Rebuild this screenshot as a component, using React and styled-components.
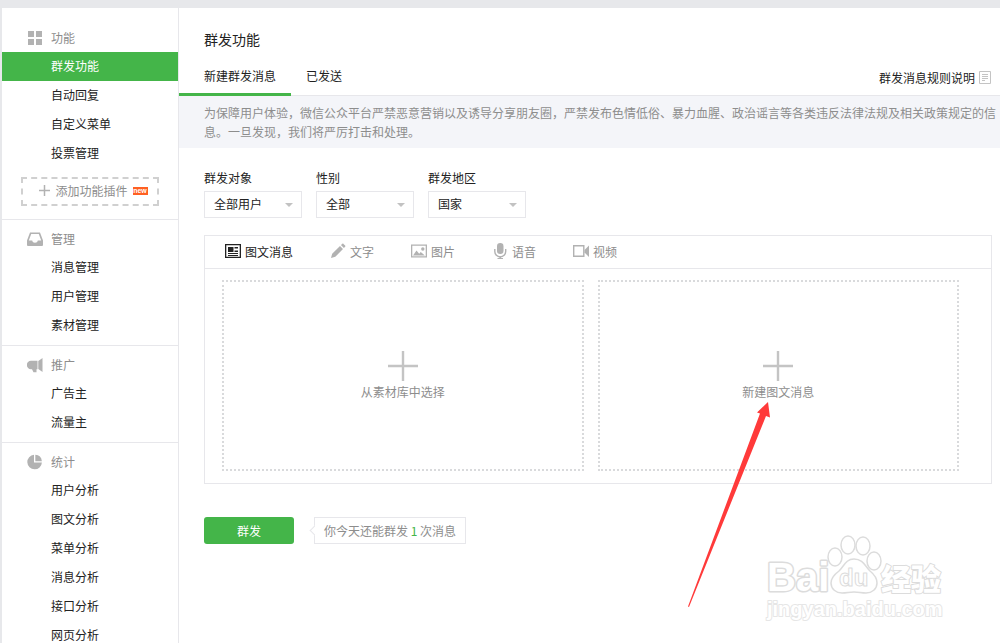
import React from "react";
import styled, { createGlobalStyle } from "styled-components";

const GlobalStyle = createGlobalStyle`
  *, *::before, *::after { box-sizing: border-box; }
  body { margin: 0; background: #e7e8eb; }
  body, button, select {
    font-family: "Noto Sans CJK SC", "Liberation Sans", sans-serif;
    font-size: 12px;
    color: #222;
  }
  a { color: inherit; text-decoration: none; }
`;

const Page = styled.div`
  position: relative;
  height: 100vh;
  padding: 8px 0 0 2px;
  overflow: hidden;
`;

const Shell = styled.div`
  display: flex;
  min-height: 100%;
  background: #fff;
`;

const Sidebar = styled.nav`
  flex: none;
  width: 177px;
  border-right: 1px solid #e7e7eb;
`;

const Group = styled.section`
  padding: ${(p) => (p.$first ? "16px 0 13px" : "5px 0")};
  border-top: ${(p) => (p.$first ? "none" : "1px solid #e7e7eb")};
`;

const GroupTitle = styled.h2`
  display: flex;
  align-items: center;
  gap: 8px;
  height: 28px;
  margin: 0;
  padding: 0 0 2px 25px;
  font-size: 12px;
  font-weight: 400;
  color: #8d8d8d;

  svg { margin-top: 2px; }
`;

const NavLink = styled.a`
  display: block;
  padding: 0 0 2px 49px;
  line-height: 27px;
  color: ${(p) => (p.$active ? "#fff" : "#222")};
  background: ${(p) => (p.$active ? "#44b549" : "transparent")};
`;

const PluginButton = styled.button`
  display: flex;
  align-items: center;
  justify-content: center;
  gap: 5px;
  width: 138px;
  height: 29px;
  margin: 9px 0 0 19px;
  padding: 0 0 2px 7px;
  border: 2px dashed #d0d0d0;
  background: none;
  color: #8d8d8d;
`;

const NewBadge = styled.span`
  width: 15px;
  height: 8px;
  background: #ff6022;
  color: #fff;
  font: 700 7px/7px "Liberation Sans", sans-serif;
  text-align: center;
`;

const Main = styled.main`
  flex: 1;
  min-width: 0;
`;

const Title = styled.h1`
  margin: 0;
  padding: 21px 25px 1px;
  font-size: 14px;
  line-height: 20px;
  font-weight: 400;
`;

const TabBar = styled.div`
  display: flex;
  align-items: flex-end;
  height: 46px;
  padding-right: 9px;
  border-bottom: 1px solid #e7e7eb;
`;

const Tab = styled.a`
  height: 38px;
  margin-bottom: -1px;
  padding: 7px 15px 0 ${(p) => (p.$active ? "25px" : "15px")};
  line-height: 22px;
  border-bottom: 3px solid ${(p) => (p.$active ? "#44b549" : "transparent")};
`;

const RulesLink = styled.a`
  display: flex;
  align-items: center;
  gap: 4px;
  height: 36px;
  margin-left: auto;
`;

const Notice = styled.p`
  margin: 0;
  padding: 7px 0 7px 25px;
  line-height: 19px;
  color: #8d8d8d;
  background: #f4f5f9;
`;

const Content = styled.div`
  padding: 20px 8px 0 25px;
`;

const Filters = styled.div`
  display: flex;
  gap: 14px;
`;

const Field = styled.label`
  display: flex;
  flex-direction: column;
  gap: 3px;
  line-height: 20px;
`;

const SelectBox = styled.span`
  display: block;
  position: relative;
  width: 98px;

  &::after {
    content: "";
    position: absolute;
    right: 9px;
    top: 12px;
    border: 4px solid transparent;
    border-top-color: #c2c2c2;
    border-bottom: 0;
    pointer-events: none;
  }
`;

const Select = styled.select`
  display: block;
  appearance: none;
  width: 100%;
  height: 27px;
  padding: 0 20px 2px 9px;
  border: 1px solid #e7e7eb;
  border-radius: 0;
  background: #fff;
`;

const Panel = styled.section`
  margin-top: 17px;
  border: 1px solid #e7e7eb;
`;

const MediaTabs = styled.div`
  display: flex;
  gap: 37px;
  height: 33px;
  padding-left: 20px;
  border-bottom: 1px solid #e7e7eb;
`;

const MediaTab = styled.button`
  display: flex;
  align-items: center;
  gap: 4px;
  padding: 0 0 2px;
  border: 0;
  background: none;
  color: ${(p) => (p.$active ? "#222" : "#8d8d8d")};
`;

const Cards = styled.div`
  display: flex;
  gap: 14px;
  padding: 11px 32px 12px 17px;
`;

const CardSlot = styled.div`
  position: relative;
  flex: 1;
`;

const Card = styled.button`
  display: flex;
  flex-direction: column;
  align-items: center;
  justify-content: center;
  gap: 1px;
  width: 100%;
  height: 191px;
  padding: 2px 0 0;
  border: 2px dotted #d9dadc;
  background: none;
  color: #8d8d8d;
  line-height: 20px;
`;

const Pointer = styled.svg`
  position: absolute;
  left: calc(50% - 91px);
  top: 121px;
  pointer-events: none;
`;

const Footer = styled.div`
  display: flex;
  gap: 20px;
  margin-top: 33px;
`;

const SendButton = styled.button`
  width: 90px;
  height: 27px;
  padding: 0;
  border: 0;
  border-radius: 3px;
  background: #44b549;
  color: #fff;
`;

const Hint = styled.span`
  position: relative;
  height: 27px;
  padding: 0 9px;
  border: 1px solid #e7e7eb;
  line-height: 26px;
  color: #8d8d8d;

  &::before {
    content: "";
    position: absolute;
    left: -4px;
    top: 9px;
    width: 7px;
    height: 7px;
    border: solid #e7e7eb;
    border-width: 0 0 1px 1px;
    background: #fff;
    transform: rotate(45deg);
  }
`;

const Count = styled.em`
  font-style: normal;
  color: #44b549;
`;

const Watermark = styled.svg`
  position: absolute;
  right: 50px;
  bottom: 18px;
  pointer-events: none;
`;

const icon = { width: 16, height: 16, viewBox: "0 0 16 16", fill: "#b2b2b2", "aria-hidden": true };

const GridIcon = () => (
  <svg {...icon}>
    <path d="M1 1h6v6H1zM9 1h6v6H9zM1 9h6v6H1zM9 9h6v6H9z" />
  </svg>
);

const InboxIcon = () => (
  <svg {...icon}>
    <path fillRule="evenodd" d="M3 1.500h10l3 8V14a1 1 0 0 1-1 1H1a1 1 0 0 1-1-1V9.500zM4.200 3 1.800 9.500h3.400c.3 1.500 1.300 2.200 2.800 2.200s2.500-.7 2.800-2.200h3.400L11.800 3z" />
  </svg>
);

const MegaphoneIcon = () => (
  <svg {...icon}>
    <path d="M4 3.800h6.500v8.400H9.500v3H6.500L5 12.200H4a4.200 4.200 0 0 1 0-8.400zM11.300 4 15.500 1v14l-4.200-3z" />
  </svg>
);

const PieIcon = () => (
  <svg {...icon}>
    <path d="M7 .8V8.500h7.900A7.300 7.300 0 1 1 7 .8z" />
    <path d="M8.300.8A7.200 7.200 0 0 1 14.900 7.200H8.300z" />
  </svg>
);

const NewsIcon = () => (
  <svg {...icon} fill="#222">
    <path fillRule="evenodd" d="M0 1h16v14H0zM1.300 2.300v11.400h13.400V2.300z" />
    <path d="M3 4h5.500v5H3zM9.500 4H13v1.400H9.500zM9.500 7.500H13V9H9.500zM3 10h10v1H3zM3 12h10v1H3z" />
  </svg>
);

const PencilIcon = () => (
  <svg {...icon}>
    <path d="M1 15l1.200-4.300L10 3l3 3-7.700 7.800zM10.900 2.100l1.300-1.200c.4-.4.900-.4 1.300 0l1.600 1.600c.4.4.4.900 0 1.300l-1.200 1.300z" />
  </svg>
);

const ImageIcon = () => (
  <svg {...icon}>
    <path fillRule="evenodd" d="M0 1.500h16v13H0zM1.300 2.800v10.400h13.400V2.800z" />
    <path d="M2 12.500l3.500-5 2.700 3.200 1.500-1.700 1.300 1 2.800 2.500z" />
    <circle cx="11.800" cy="6" r="1.700" />
  </svg>
);

const MicIcon = () => (
  <svg {...icon}>
    <rect x="5" y="0" width="6.500" height="11" rx="3.200" />
    <path d="M2.800 6v2.500a5.400 5.400 0 0 0 10.900 0V6" fill="none" stroke="#b2b2b2" strokeWidth="1.400" />
    <path d="M7.500 13.500h1.500V15h2v1H5.500v-1h2z" />
  </svg>
);

const VideoIcon = () => (
  <svg {...icon}>
    <path fillRule="evenodd" d="M0 2h11.500v12H0zM1.400 3.400v9.200h8.700V3.400z" />
    <path d="M11.500 7 16 2.500v11.500l-4.500-4.500z" />
  </svg>
);

const DocIcon = () => (
  <svg width="12" height="13" viewBox="0 0 12 13" fill="none" stroke="#c4c4c4" aria-hidden="true">
    <path d="M.5.5h11v12H.5z" />
    <path d="M3 3.500h6M3 5.500h6M3 7.500h6M3 9.500h3" />
  </svg>
);

const SmallPlus = () => (
  <svg width="11" height="11" viewBox="0 0 11 11" aria-hidden="true">
    <path d="M5.500 0v11M0 5.500h11" stroke="#b2b2b2" strokeWidth="1.500" />
  </svg>
);

const BigPlus = () => (
  <svg width="30" height="30" viewBox="0 0 30 30" aria-hidden="true">
    <path d="M15 0v30M0 15h30" stroke="#c4c4c4" strokeWidth="2.400" />
  </svg>
);

const groups = [
  { title: "功能", Icon: GridIcon, items: ["群发功能", "自动回复", "自定义菜单", "投票管理"], plugin: true },
  { title: "管理", Icon: InboxIcon, items: ["消息管理", "用户管理", "素材管理"] },
  { title: "推广", Icon: MegaphoneIcon, items: ["广告主", "流量主"] },
  { title: "统计", Icon: PieIcon, items: ["用户分析", "图文分析", "菜单分析", "消息分析", "接口分析", "网页分析"] },
];

const filters = [
  { label: "群发对象", value: "全部用户" },
  { label: "性别", value: "全部" },
  { label: "群发地区", value: "国家" },
];

const media = [
  { label: "图文消息", Icon: NewsIcon },
  { label: "文字", Icon: PencilIcon },
  { label: "图片", Icon: ImageIcon },
  { label: "语音", Icon: MicIcon },
  { label: "视频", Icon: VideoIcon },
];

export default function App() {
  return (
    <Page>
      <GlobalStyle />
      <Shell>
        <Sidebar>
          {groups.map(({ title, Icon, items, plugin }, g) => (
            <Group key={title} $first={g === 0}>
              <GroupTitle>
                <Icon />
                {title}
              </GroupTitle>
              {items.map((item) => (
                <NavLink key={item} href="#" $active={item === "群发功能"}>
                  {item}
                </NavLink>
              ))}
              {plugin && (
                <PluginButton type="button">
                  <SmallPlus />
                  添加功能插件
                  <NewBadge>new</NewBadge>
                </PluginButton>
              )}
            </Group>
          ))}
        </Sidebar>
        <Main>
          <Title>群发功能</Title>
          <TabBar>
            <Tab href="#" $active>新建群发消息</Tab>
            <Tab href="#">已发送</Tab>
            <RulesLink href="#">
              群发消息规则说明
              <DocIcon />
            </RulesLink>
          </TabBar>
          <Notice>
            为保障用户体验，微信公众平台严禁恶意营销以及诱导分享朋友圈，严禁发布色情低俗、暴力血腥、政治谣言等各类违反法律法规及相关政策规定的信息。一旦发现，我们将严厉打击和处理。
          </Notice>
          <Content>
            <Filters>
              {filters.map(({ label, value }) => (
                <Field key={label}>
                  {label}
                  <SelectBox>
                    <Select defaultValue={value}>
                      <option>{value}</option>
                    </Select>
                  </SelectBox>
                </Field>
              ))}
            </Filters>
            <Panel>
              <MediaTabs>
                {media.map(({ label, Icon }, i) => (
                  <MediaTab key={label} type="button" $active={i === 0}>
                    <Icon />
                    {label}
                  </MediaTab>
                ))}
              </MediaTabs>
              <Cards>
                <CardSlot>
                  <Card type="button">
                    <BigPlus />
                    从素材库中选择
                  </Card>
                </CardSlot>
                <CardSlot>
                  <Card type="button">
                    <BigPlus />
                    新建图文消息
                  </Card>
                  <Pointer width="84" height="208" viewBox="0 0 84 208" aria-hidden="true">
                    <path d="M81 1 83 16.500 79 15 2 206 1 205.500 73 12.500 70 11.500z" fill="#ff3a3a" />
                  </Pointer>
                </CardSlot>
              </Cards>
            </Panel>
            <Footer>
              <SendButton type="button">群发</SendButton>
              <Hint>
                你今天还能群发 <Count>1</Count> 次消息
              </Hint>
            </Footer>
          </Content>
        </Main>
      </Shell>
      <Watermark width="190" height="92" viewBox="0 0 190 92" fill="#fff" stroke="#dcdcdc" strokeLinejoin="round" fontFamily="Liberation Sans, sans-serif" fontWeight="700">
        <text x="7" y="58" fontSize="40" strokeWidth="3" paintOrder="stroke">Bai</text>
        <g strokeWidth="1.500">
          <ellipse cx="75" cy="24" rx="7" ry="9" />
          <ellipse cx="88" cy="12" rx="7" ry="9" />
          <ellipse cx="103" cy="13" rx="7" ry="9" />
          <ellipse cx="114" cy="28" rx="7" ry="9" />
          <path d="M94 26c9 0 11 7 16 12 5 4 7 8 7 12 0 6-5 10-11 10-5 0-7-1-12-1s-7 1-12 1c-6 0-11-4-11-10 0-5 4-9 8-12 5-5 7-12 15-12z" />
        </g>
        <text x="79" y="53" fontSize="24" strokeWidth="1">du</text>
        <text x="121" y="57" fontSize="30" fontWeight="900" fontFamily="Noto Sans CJK SC, sans-serif" strokeWidth="2" paintOrder="stroke">经验</text>
        <text x="7" y="83" fontSize="20" strokeWidth="2" stroke="#e6e6e6" paintOrder="stroke">jingyan.baidu.com</text>
      </Watermark>
    </Page>
  );
}
